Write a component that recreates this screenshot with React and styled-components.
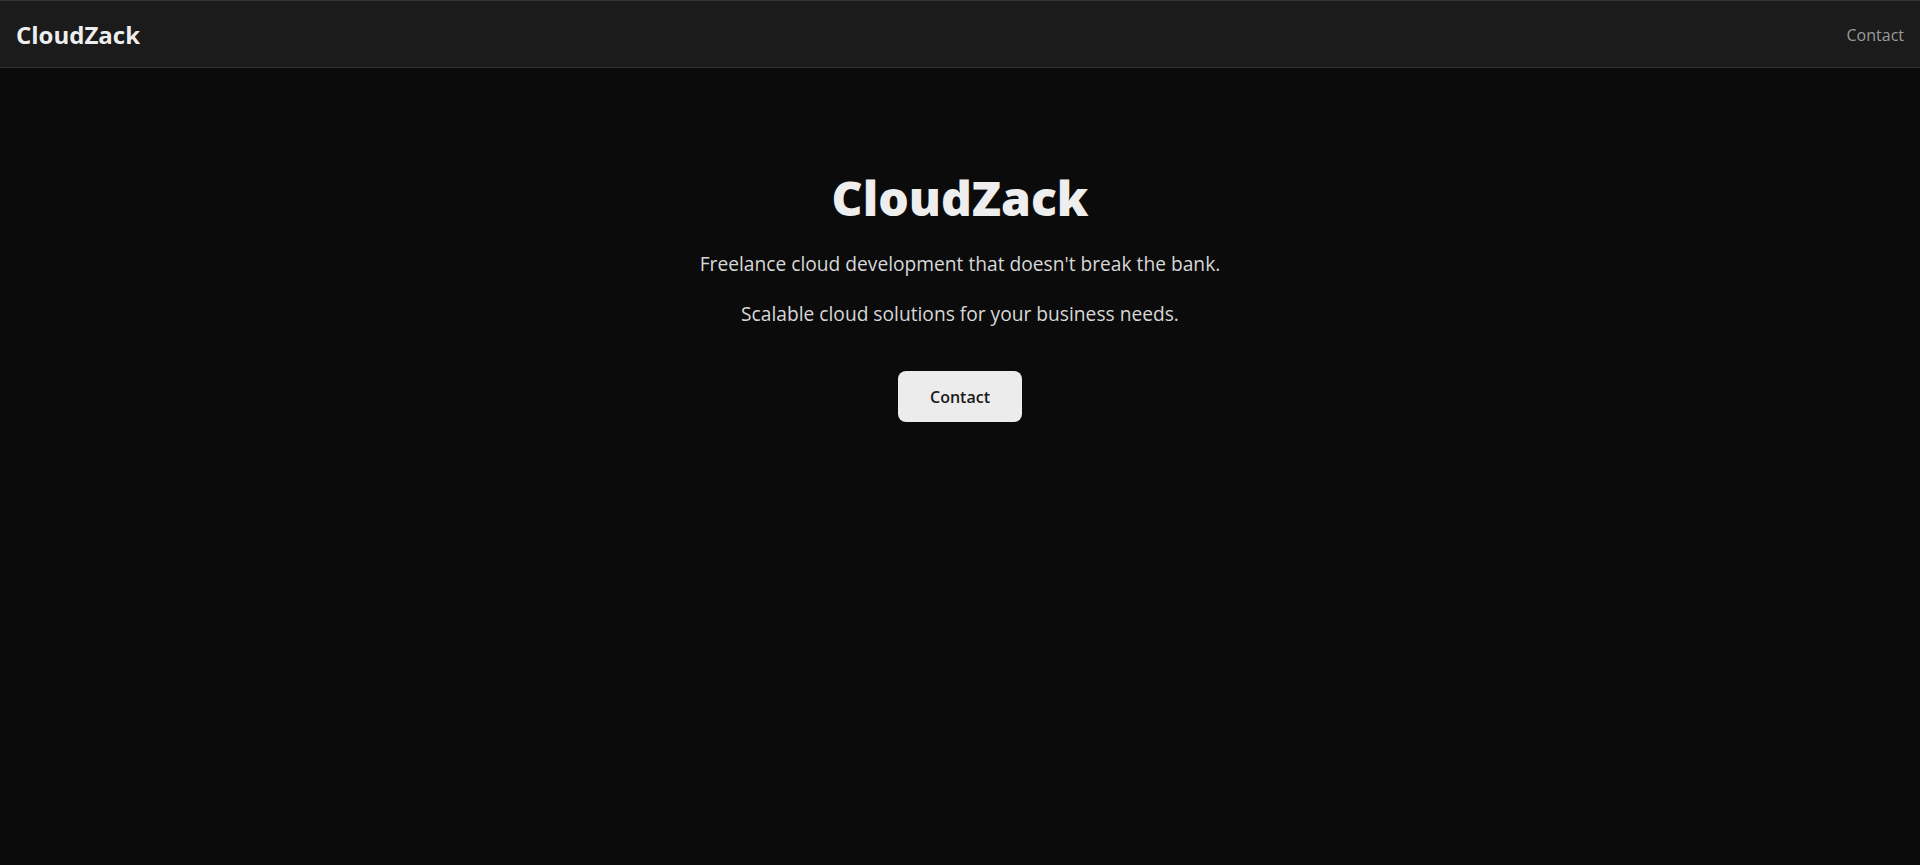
import styled, { createGlobalStyle } from "styled-components";

const GlobalStyle = createGlobalStyle`
  html, body {
    margin: 0;
    padding: 0;
    background: #0b0b0b;
    font-family: "Open Sans", "Liberation Sans", sans-serif;
  }
  * {
    box-sizing: border-box;
  }
`;

function App() {
  return (
    <Page>
      <GlobalStyle />
      <Navbar>
        <Brand>CloudZack</Brand>
        <NavLink href="#contact">Contact</NavLink>
      </Navbar>
      <Hero>
        <Title>CloudZack</Title>
        <Tagline>Freelance cloud development that doesn't break the bank.</Tagline>
        <Tagline>Scalable cloud solutions for your business needs.</Tagline>
        <ContactButton>Contact</ContactButton>
      </Hero>
    </Page>
  );
}

export default App;

const Page = styled.div`
  min-height: 100vh;
  background: #0b0b0b;
  color: #ececec;
`;

const Navbar = styled.nav`
  display: flex;
  justify-content: space-between;
  align-items: center;
  height: 68px;
  padding: 0 16px;
  background: #1b1b1b;
  border-top: 1px solid #343434;
  border-bottom: 1px solid #343434;
`;

const Brand = styled.div`
  font-size: 24px;
  font-weight: 700;
  color: #eeeeee;
`;

const NavLink = styled.a`
  margin-top: 2px;
  font-size: 16px;
  color: #9a9a9a;
  text-decoration: none;
`;

const Hero = styled.main`
  display: flex;
  flex-direction: column;
  align-items: center;
  padding-top: 97px;
  text-align: center;
`;

const Title = styled.h1`
  margin: 0 0 20px;
  font-size: 48px;
  font-weight: 800;
  color: #eeeeee;
`;

const Tagline = styled.p`
  margin: 0 0 23px;
  font-size: 19.2px;
  color: #d8d8d8;
`;

const ContactButton = styled.button`
  margin-top: 21px;
  width: 124px;
  height: 51px;
  border: none;
  border-radius: 8px;
  background: #ececec;
  color: #1a1a1a;
  font-family: inherit;
  font-size: 16px;
  font-weight: 600;
  cursor: pointer;
`;
